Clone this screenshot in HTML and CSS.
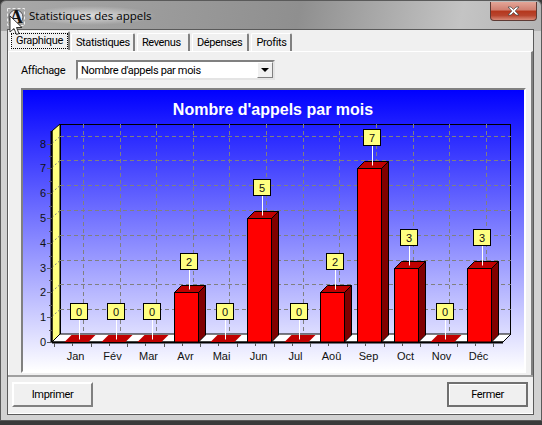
FILE: index.html
```html
<!DOCTYPE html>
<html lang="fr">
<head>
    <meta charset="UTF-8">
    <title>Statistiques des appels</title>
    <link rel="stylesheet" href="styles.css">
</head>
<body>
    <div class="window">
        <div class="titlebar">
            <svg class="app-icon" width="18" height="18" viewBox="0 0 18 18">
                <rect x="0.5" y="0.5" width="17" height="17" fill="none" stroke="#eee" stroke-dasharray="3 2"/>
                <circle cx="9" cy="9" r="7" fill="#e4e4ee" stroke="#555"/>
                <text x="9" y="15" text-anchor="middle" class="app-icon-letter">A</text>
            </svg>
            <span class="title-text">Statistiques des appels</span>
            <button class="close-btn">
                <svg width="13" height="10" viewBox="0 0 13 10">
                    <path d="M1 1h3l2.500 2.500L9 1h3L8.200 5 12 9H9L6.500 6.500 4 9H1l3.800-4z" fill="#fff" stroke="#444" stroke-width="0.7"/>
                </svg>
            </button>
        </div>

        <div class="content">
            <div class="tabs">
                <div class="tab active"><span>Graphique</span></div>
                <div class="tab">Statistiques</div>
                <div class="tab tab-wide">Revenus</div>
                <div class="tab tab-mid">Dépenses</div>
                <div class="tab">Profits</div>
            </div>

            <div class="tab-panel">
                <div class="filter-row">
                    <label>Affichage</label>
                    <div class="combo">
                        <span class="combo-value">Nombre d'appels par mois</span>
                        <span class="combo-arrow"></span>
                    </div>
                </div>
                <div class="chart-box">
                    <svg id="chart" width="501" height="281" viewBox="23 90 501 281"></svg>
                </div>
            </div>

            <div class="footer">
                <button class="btn">Imprimer</button>
                <button class="btn btn-default">Fermer</button>
            </div>
        </div>
    </div>

    <svg class="cursor" width="14" height="22" viewBox="0 0 14 22">
        <path d="M1 1v16l4-3.500 2.500 6 2.500-1-2.500-6H13z" fill="#fff" stroke="#333"/>
    </svg>

    <script src="chart.js"></script>
</body>
</html>
```

FILE: styles.css
```css
* {
    box-sizing: border-box;
    margin: 0;
    padding: 0;
}

html, body {
    width: 542px;
    height: 425px;
    overflow: hidden;
}

body {
    font-family: Roboto, "Liberation Sans", Arial, sans-serif;
    font-size: 11px;
    letter-spacing: -0.35px;
    color: #000;
    background: #3a3a3a;
    position: relative;
}

.window {
    width: 542px;
    height: 421px;
    display: flex;
    flex-direction: column;
    padding: 0 7px 5px 6px;
    border: 1px solid #5a5a5a;
    border-radius: 6px 6px 0 0;
    background: linear-gradient(100deg, #a9a9a9 0%, #8f8f8f 55%, #c4c4c4 85%, #b4b4b4 100%) top / 100% 30px no-repeat, #d2d2d2;
}

.titlebar {
    height: 28px;
    display: flex;
    align-items: center;
    flex-shrink: 0;
    position: relative;
}

.app-icon {
    margin: 4px 0 0 0;
    flex-shrink: 0;
}

.app-icon-letter {
    font-family: "Liberation Serif", serif;
    font-size: 18px;
    font-weight: bold;
    fill: #111;
}

.title-text {
    font-family: "Open Sans", sans-serif;
    font-size: 11.5px;
    letter-spacing: 0;
    color: #000;
    padding: 2px 4px;
    background: radial-gradient(closest-side, rgba(235,235,235,0.8), rgba(235,235,235,0));
}

.close-btn {
    position: absolute;
    top: 1px;
    right: -3px;
    width: 47px;
    height: 19px;
    border: 1px solid #5e3a34;
    border-top: none;
    border-radius: 0 0 4px 4px;
    background: linear-gradient(#e3a597 0%, #d07f70 45%, #b5361c 50%, #b8452e 75%, #d98a78 100%);
    display: flex;
    align-items: center;
    justify-content: center;
}

.content {
    flex: 1;
    min-height: 0;
    display: flex;
    flex-direction: column;
    background: #f0f0f0;
    border: 1px solid #5a5a5a;
}

.tabs {
    display: flex;
    align-items: flex-end;
    gap: 2px;
    height: 21px;
    padding-left: 2px;
}

.tab {
    height: 18px;
    padding: 0 3px 0 4px;
    line-height: 18px;
    background: #f0f0f0;
    border-top: 1px solid #fff;
    border-left: 1px solid #fff;
    border-right: 2px solid #808080;
    border-radius: 2px 2px 0 0;
}

.tab-wide {
    padding-right: 7px;
}

.tab-mid {
    padding-right: 5px;
}

.tab.active {
    height: 19px;
    padding: 1px 0;
    margin-bottom: 1px;
    margin-right: -1px;
}

.tab.active span {
    display: block;
    height: 16px;
    line-height: 14px;
    padding: 0 4px;
    border: 1px dotted #000;
}

.tab-panel {
    flex: 1;
    min-height: 0;
    display: flex;
    flex-direction: column;
    padding: 8px 8px 3px 12px;
    border-top: 1px solid #fff;
    border-left: 1px solid #fff;
    border-right: 2px solid #808080;
}

.filter-row {
    display: flex;
    align-items: center;
    height: 20px;
    margin-bottom: 8px;
}

.filter-row label {
    width: 55px;
}

.combo {
    width: 199px;
    height: 20px;
    display: flex;
    align-items: center;
    justify-content: space-between;
    background: #fff;
    border: 2px solid #808080;
    border-right-color: #e4e4e4;
    border-bottom-color: #e4e4e4;
}

.combo-value {
    padding-left: 3px;
}

.combo-arrow {
    width: 16px;
    height: 16px;
    position: relative;
    background: #f0f0f0;
    border: 1px solid #808080;
    border-top-color: #fff;
    border-left-color: #fff;
    display: flex;
    align-items: center;
    justify-content: center;
}

.combo-arrow::after {
    content: "";
    border-top: 4px solid #000;
    border-left: 4px solid transparent;
    border-right: 4px solid transparent;
}

.chart-box {
    width: 505px;
    height: 285px;
    border: 2px solid #808080;
    border-right-color: #fff;
    border-bottom-color: #fff;
    background: linear-gradient(#0000ff 0%, #ffffff 100%);
}

#chart {
    display: block;
    letter-spacing: 0;
}

.chart-title {
    font-family: "Liberation Sans", Arial, sans-serif;
    font-size: 16px;
    font-weight: bold;
    fill: #fff;
}

.axis-label,
.month-label,
.value-label {
    font-family: "Liberation Sans", Arial, sans-serif;
    font-size: 11px;
    fill: #111;
}

.footer {
    height: 39px;
    flex-shrink: 0;
    display: flex;
    justify-content: space-between;
    align-items: flex-start;
    padding: 5px 5px 0 4px;
    border-top: 2px solid #a0a0a0;
    border-bottom: 1px solid #fff;
}

.btn {
    width: 81px;
    height: 25px;
    font-family: Roboto, "Liberation Sans", Arial, sans-serif;
    font-size: 11px;
    letter-spacing: -0.35px;
    background: #f0f0f0;
    border: 2px solid;
    border-color: #fff #808080 #808080 #fff;
}

.btn-default {
    border-color: #707070;
    box-shadow: inset 1px 1px 0 #fff;
}

.cursor {
    position: absolute;
    left: 9px;
    top: 15px;
}
```

FILE: chart.js
```js
// page coordinates, the svg viewBox starts where the chart box does
const months = ['Jan', 'Fév', 'Mar', 'Avr', 'Mai', 'Jun', 'Jul', 'Aoû', 'Sep', 'Oct', 'Nov', 'Déc'];
const values = [0, 0, 0, 2, 0, 5, 0, 2, 7, 3, 0, 3];

const left = 52, right = 503, floor = 342, depth = 8;
const unit = 24.8, step = 36.62, barWidth = 24;

let out = '';

function poly(points, fill, extra) {
    out += `<polygon points="${points}" fill="${fill}" stroke="#000" ${extra || ''}/>`;
}

function line(x1, y1, x2, y2, stroke, extra) {
    out += `<line x1="${x1}" y1="${y1}" x2="${x2}" y2="${y2}" stroke="${stroke}" ${extra || ''}/>`;
}

function text(x, y, cls, anchor, str) {
    out += `<text x="${x}" y="${y}" class="${cls}" text-anchor="${anchor}">${str}</text>`;
}

text(273, 115, 'chart-title', 'middle', "Nombre d'appels par mois");

// walls and floor
out += `<rect x="60.5" y="124.500" width="450" height="210" fill="none" stroke="#000"/>`;
poly(`${left},${floor} ${left + depth},${floor - depth} ${right + depth},${floor - depth} ${right},${floor}`, '#fff');
poly(`${left},${floor} ${left},131 ${left + depth},124 ${left + depth},${floor - depth}`, '#ffff80');

// grid
for (let n = 1; n <= 8; n++) {
    const y = Math.round(floor - depth - n * unit) + 0.5;
    line(left + depth, y, right + depth, y, '#808080', 'stroke-dasharray="4 3"');
    line(left, y + 7, left + depth, y, '#808080', 'stroke-dasharray="2 2"');
}
for (let n = 0; n < 12; n++) {
    const x = Math.round(83 + n * step) + 0.5;
    line(x, 124, x, floor - depth, '#808080', 'stroke-dasharray="4 3"');
}

// y axis
line(51.5, 131, 51.5, floor, '#000', 'stroke-width="2"');
for (let n = 0; n <= 8; n++) {
    const y = Math.round(floor - n * unit);
    line(47, y + 0.5, 52, y + 0.5, '#555');
    if (n < 8) line(49, y - 12 + 0.5, 52, y - 12 + 0.5, '#555');
    text(46, y + 4, 'axis-label', 'end', n);
}

// x axis
line(left, floor + 0.5, right, floor + 0.5, '#000', 'stroke-width="2"');
for (let n = 0; n <= 12; n++) {
    const x = Math.round(54 + n * step) + 0.5;
    line(x, floor + 1, x, floor + 5, '#555');
    if (n < 12) line(x + 18, floor + 1, x + 18, floor + 4, '#555');
}

// bars
values.forEach(function (v, i) {
    const x = Math.round(65 + i * step) - 0.5;
    const top = Math.round(floor - v * unit) + 0.5;
    const d = 7;

    if (v > 0) {
        poly(`${x + barWidth},${top} ${x + barWidth + d},${top - d} ${x + barWidth + d},${floor - d} ${x + barWidth},${floor}`, '#800000');
        poly(`${x},${top} ${x + d},${top - d} ${x + barWidth + d},${top - d} ${x + barWidth},${top}`, '#c00000');
        out += `<rect x="${x}" y="${top}" width="${barWidth}" height="${floor - top}" fill="#ff0000" stroke="#000"/>`;
    } else {
        out += `<polygon points="${x},${floor} ${x + d},${floor - d} ${x + barWidth + d},${floor - d} ${x + barWidth},${floor}" fill="#c00000"/>`;
    }

    // value tag
    const tipX = x + 15;
    const tipY = top - 3;
    line(tipX, tipY, tipX, tipY - 20, '#fff');
    out += `<rect x="${tipX - 9}" y="${tipY - 36}" width="17" height="16" fill="#ffff80" stroke="#000"/>`;
    text(tipX - 0.5, tipY - 24, 'value-label', 'middle', v);

    text(x + 11, 360, 'month-label', 'middle', months[i]);
});

document.getElementById('chart').innerHTML = out;
```
